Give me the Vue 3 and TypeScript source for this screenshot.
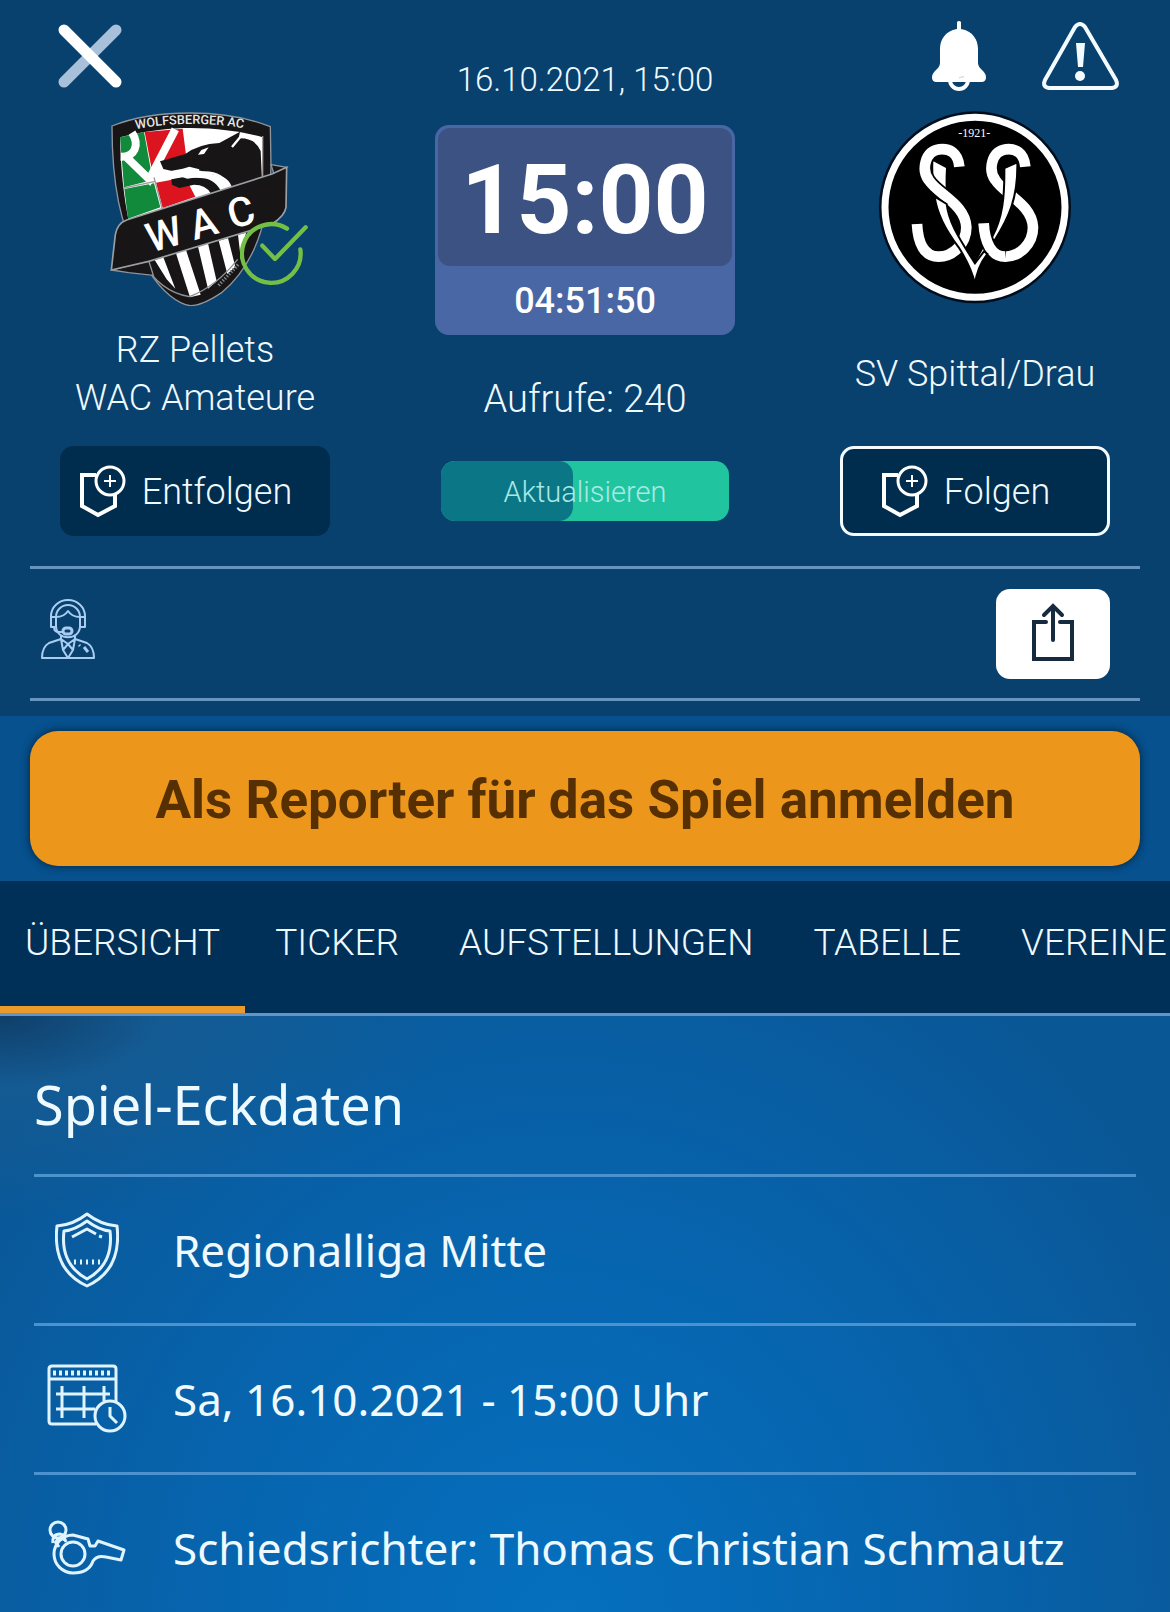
<script setup lang="ts">
import { ref } from 'vue'

type IconName = 'shield' | 'calendar' | 'whistle'

interface Fact {
  icon: IconName
  text: string
}

const tabs: string[] = ['ÜBERSICHT', 'TICKER', 'AUFSTELLUNGEN', 'TABELLE', 'VEREINE']
const activeTab = ref<string>('ÜBERSICHT')
const refreshProgress = ref<number>(46)

const facts: Fact[] = [
  { icon: 'shield', text: 'Regionalliga Mitte' },
  { icon: 'calendar', text: 'Sa, 16.10.2021 - 15:00 Uhr' },
  { icon: 'whistle', text: 'Schiedsrichter: Thomas Christian Schmautz' },
]
</script>

<template>
  <main class="page">
    <header class="match">
      <div class="board">
        <section class="side">
          <div class="tools tools-left">
            <button class="plain" type="button" aria-label="Schließen">
              <svg width="64" height="64" viewBox="0 0 64 64" fill="none" stroke-width="11" stroke-linecap="round">
                <path d="M58 6 6 58" stroke="#a9c0da" />
                <path d="M6 6 58 58" stroke="#fff" />
              </svg>
            </button>
          </div>
          <div class="crest">
            <svg class="wac" width="180" height="196" viewBox="214 298 540 588">
              <path d="M220 346C290 318 370 307 455 307c90 0 175 15 240 41l2 122c-7 180-57 300-147 375-40 27-70 40-95 40-35-5-85-40-125-105C260 700 220 560 220 346Z" fill="#171515" stroke="#8f959b" stroke-width="4" />
              <path d="M244 380c86-22 156-28 211-28 85 0 165 13 217 28v125L270 630c-15-70-24-160-26-250Z" fill="#fff" />
              <path d="M244 380 316 364 342 508 256 530Z M257 535 346 518 365 590 268 624Z" fill="#128a3b" />
              <path d="M318 364 432 354 442 432 366 452 342 490Z M352 516 440 500 470 558 372 592Z" fill="#dc1420" />
              <path d="M246 438c42 2 58-34 34-72M264 440l68 66 78-150" fill="none" stroke="#fff" stroke-width="24" />
              <path d="M364 452 440 430q40-30 102-33l62-34-4 20q50-2 66 38l4 90-88 26q-10-42-60-46l-42-12-80 2-26-6Z" fill="#171515" />
              <path d="M398 506l34-6 52 2q42 0 62 38l-30 8q-14-26-50-26l-44 10-22-10Z" fill="#171515" />
              <path d="M392 482l10 22 20-8 24 8 28-4 8-24-30-8-20 6Z" fill="#fff" />
              <path d="M478 432l10-14 22-8-14 20Z" fill="#fff" />
              <path d="M480 486q72-8 90 46M580 409l28-34" fill="none" stroke="#fff" stroke-width="7" />
              <path d="M672 376V500M256 532 350 512M346 500 370 592" stroke="#9c9c9c" stroke-width="4" />
              <path d="M348 748 374 740 410 834 384 806ZM412 728 442 718 486 852 454 860ZM478 708 508 698 534 812 508 834ZM540 690 568 682 590 768 566 790ZM598 672 622 666 606 742Z" fill="#fff" />
              <path d="M312 752q50 90 140 106 80-30 145-112" fill="none" stroke="#8f959b" stroke-width="4" />
              <path d="M540 824 600 760" stroke="#85888b" stroke-width="10" stroke-dasharray="4 5" />
              <path d="M218 778 330 750 344 794 270 786Z M697 462 744 470 706 490Z" fill="#171515" stroke="#8f959b" stroke-width="4" />
              <path d="M218 778 230 672q6-34 34-44L700 490l44-20-2 120q-4 26-42 50L330 752Z" fill="#171515" stroke="#9a9fa4" stroke-width="5" />
              <path id="wac-arc" d="M292 356Q460 322 644 358" fill="none" />
              <text class="wac-ring"><textPath href="#wac-arc">WOLFSBERGER AC</textPath></text>
              <text class="wac-name" transform="translate(336 726) rotate(-16)" x="0 136 254" y="0">WAC</text>
            </svg>
            <svg class="followed" width="68" height="66" viewBox="600 626 204 198" fill="none" stroke="#74bf45" stroke-width="13" stroke-linecap="round" stroke-linejoin="round">
              <path d="M741 652A88 88 0 1 0 781 714M667 703 705 743 797 648" />
            </svg>
          </div>
          <h2 class="team">RZ Pellets<br />WAC Amateure</h2>
          <button class="follow" type="button">
            <svg width="48" height="54" viewBox="0 0 48 54" fill="none" stroke="#fff" stroke-width="4">
              <path d="M18 10H4V41L20 50 37 41V30" />
              <circle cx="32" cy="16" r="14" stroke-width="3" />
              <path d="M26 16H38M32 10V22" stroke-width="2" />
            </svg>
            <span>Entfolgen</span>
          </button>
        </section>

        <section class="centre">
          <time class="date">16.10.2021, 15:00</time>
          <div class="clock">
            <strong class="kickoff">15:00</strong>
            <span class="countdown">04:51:50</span>
          </div>
          <p class="views">Aufrufe: 240</p>
          <button class="refresh" type="button">
            <span class="refresh-fill" :style="{ width: refreshProgress + '%' }"></span>
            <span class="refresh-text">Aktualisieren</span>
          </button>
        </section>

        <section class="side">
          <div class="tools tools-right">
            <button class="plain" type="button" aria-label="Benachrichtigungen">
              <svg width="56" height="72" viewBox="0 0 56 72">
                <path d="M26 2q2-2 4 0V9C42 11 47 20 47 29V43c0 6 8 8 8 14 0 4-2 5-5 5H6c-3 0-5-1-5-5 0-6 8-8 8-14V29C9 20 14 11 26 9Z" fill="#fff" />
                <path d="M19 60a9 9 0 0 0 18 0" fill="none" stroke="#fff" stroke-width="4" />
                <path d="M28 58q3-2 5-1" fill="none" stroke="#c3ced9" stroke-width="1" />
              </svg>
            </button>
            <button class="plain" type="button" aria-label="Problem melden">
              <svg width="78" height="70" viewBox="0 0 78 70" fill="none" stroke="#f4fbff" stroke-width="4" stroke-linejoin="round">
                <path d="M33 7Q38 1 43 7L74 60Q77 67 70 68H7Q0 67 3 60Z" />
                <path d="M34 23H43L41 47H36Z" fill="#f4fbff" stroke="none" />
                <circle cx="38" cy="56" r="5" fill="#f4fbff" stroke="none" />
              </svg>
            </button>
          </div>
          <div class="crest">
            <svg width="194" height="196" viewBox="56 298 582 588">
              <circle cx="347" cy="590" r="288" fill="#000d1c" />
              <circle cx="347" cy="590" r="270" fill="#000" stroke="#fff" stroke-width="21" />
              <text class="svs-year" x="345" y="379">-1921-</text>
              <path d="M222 452 260 472C256 540 262 580 270 610L244 620C226 560 220 500 222 452Z" fill="#fff" />
              <path d="M300 468C296 425 270 413 240 416 196 422 186 478 208 508 236 552 318 580 321 650 321 700 280 738 238 738 196 738 176 700 173 640" fill="none" stroke="#000" stroke-width="42" />
              <path d="M300 468C296 425 270 413 240 416 196 422 186 478 208 508 236 552 318 580 321 650 321 700 280 738 238 738 196 738 176 700 173 640" fill="none" stroke="#fff" stroke-width="32" />
              <path d="M498 468C494 425 468 413 440 416 396 422 386 478 408 508 436 552 518 580 521 650 521 700 480 738 438 738 396 738 376 700 373 640" fill="none" stroke="#fff" stroke-width="32" />
              <path d="M435 472 474 455C476 560 450 620 405 690L392 712 380 725 347 812 340 765 376 700 398 680C430 620 436 560 435 472Z" fill="#fff" stroke="#000" stroke-width="6" />
              <path d="M373 640C376 690 392 730 438 738" fill="none" stroke="#000" stroke-width="42" />
              <path d="M373 638C376 695 396 738 438 738" fill="none" stroke="#fff" stroke-width="32" />
              <path d="M226 558 262 580C268 630 290 670 347 758L374 722 384 730Q354 768 347 820 336 770 298 710C252 650 232 605 226 558Z" fill="#fff" stroke="#000" stroke-width="6" />
            </svg>
          </div>
          <h2 class="team">SV Spittal/Drau</h2>
          <button class="follow outlined" type="button">
            <svg width="48" height="54" viewBox="0 0 48 54" fill="none" stroke="#fff" stroke-width="4">
              <path d="M18 10H4V41L20 50 37 41V30" />
              <circle cx="32" cy="16" r="14" stroke-width="3" />
              <path d="M26 16H38M32 10V22" stroke-width="2" />
            </svg>
            <span>Folgen</span>
          </button>
        </section>
      </div>

      <div class="actions">
        <svg width="56" height="62" viewBox="0 0 56 62" fill="none" stroke="#a9cdf0" stroke-width="2" stroke-linejoin="round">
          <path d="M11 18A17 16 0 0 1 45 18V29H40V19A12 12 0 0 0 16 19V29H11ZM11 19H16M40 19H45" />
          <path d="M16 19q8 0 12-6 4 6 12 6V28c0 15-24 15-24 0Z" />
          <path d="M14 29q0 5 5 5h4" />
          <rect x="23" y="30" width="9" height="6" rx="3" stroke-width="3" />
          <path d="M21 38V41L9 45Q2 49 2 60H54Q54 49 47 45L35 41V38M21 41 28 46 35 41M28 46 23 52 28 60 33 52ZM21 41l2 11M35 41l-2 11" />
          <path d="M44 49l4 5M39 47l1 1" stroke-width="3" />
        </svg>
        <button class="share" type="button" aria-label="Teilen">
          <svg width="44" height="58" viewBox="0 0 44 58" fill="none" stroke="#172b40" stroke-width="4" stroke-linecap="round">
            <path d="M15 19H3V56H41V19H29" />
            <path d="M22 37V3M13 12 22 3 31 12" />
          </svg>
        </button>
      </div>
    </header>

    <div class="banner">
      <button class="report" type="button">Als Reporter für das Spiel anmelden</button>
    </div>

    <nav class="tabs" aria-label="Bereiche">
      <a
        v-for="tab in tabs"
        :key="tab"
        href="#"
        class="tab"
        :class="{ active: tab === activeTab }"
        @click.prevent="activeTab = tab"
      >{{ tab }}</a>
    </nav>

    <section class="details">
      <h1 class="heading">Spiel-Eckdaten</h1>
      <ul class="facts">
        <li v-for="fact in facts" :key="fact.icon" class="fact">
          <span class="fact-icon">
            <svg v-if="fact.icon === 'shield'" width="64" height="76" viewBox="0 0 64 76" fill="none" stroke="#dff4ff" stroke-width="3" stroke-linejoin="round">
              <path d="M32 2Q18 13 2 14-3 58 32 74 67 58 62 14 46 13 32 2Z" />
              <path d="M32 9Q20 18 9 19 5 52 32 67 59 52 55 19 44 18 32 9Z" />
              <path d="M17 25 32 17 41 22M44 24 47 25" />
              <path d="M19 50H47" stroke-width="5" stroke-dasharray="2 4" />
            </svg>
            <svg v-else-if="fact.icon === 'calendar'" width="80" height="70" viewBox="0 0 80 70" fill="none" stroke="#dff4ff" stroke-width="3" stroke-linejoin="round">
              <path d="M49 60H5Q2 60 2 57V5Q2 2 5 2H66Q69 2 69 5V38M2 15H69" />
              <path d="M6 9H66" stroke-width="5" stroke-dasharray="3 3" />
              <path d="M9 30H63M9 45H48M15 22V54M37 22V54M57 22V37" />
              <circle cx="63" cy="52" r="15" />
              <path d="M63 43V52L70 59" />
            </svg>
            <svg v-else width="80" height="58" viewBox="0 0 80 58" fill="none" stroke="#dff4ff" stroke-width="3" stroke-linejoin="round">
              <circle cx="11" cy="11" r="8" />
              <path d="M6 24q-1-9 7-9 5 1 4 7M9 25q0-5 4-5" />
              <path d="M8 22l4 6M17 18l2 5" />
              <circle cx="26" cy="35" r="12" />
              <path d="M26 16 41 20 43 27H48L51 22 77 31 74 41 59 38Q50 36 46 42 42 54 26 54A19 19 0 0 1 26 16Z" />
            </svg>
          </span>
          <span>{{ fact.text }}</span>
        </li>
      </ul>
    </section>
  </main>
</template>

<style>
html,
body {
  margin: 0;
  background: #0762ac;
}
</style>

<style scoped>
.page {
  overflow: hidden;
  color: #effaff;
  font-family: Roboto, "Liberation Sans", sans-serif;
  font-weight: 300;
}

button {
  margin: 0;
  padding: 0;
  border: 0;
  background: none;
  color: inherit;
  font: inherit;
  cursor: pointer;
}

svg {
  display: block;
  flex: none;
}

h1,
h2,
p,
ul {
  margin: 0;
  padding: 0;
  font-weight: inherit;
}

.match {
  padding: 0 30px 15px;
  background: #08406e;
}

.board {
  display: flex;
  justify-content: space-between;
  padding: 0 20px 30px;
}

.side {
  display: flex;
  flex-direction: column;
  align-items: center;
  width: 290px;
}

.tools {
  display: flex;
  align-self: stretch;
  box-sizing: border-box;
  height: 110px;
  padding-top: 20px;
}

.tools-left {
  padding: 24px 8px 0;
}

.tools-right {
  justify-content: flex-end;
  gap: 55px;
}

.plain {
  display: flex;
  align-items: flex-start;
}

.crest {
  position: relative;
  height: 196px;
}

.wac {
  margin-left: 10px;
}

.wac-ring {
  fill: #e6e6e6;
  font: 500 38px Roboto, sans-serif;
}

.wac-name {
  fill: #fff;
  font: 500 122px Roboto, sans-serif;
}

.svs-year {
  fill: #fff;
  font: 400 36px "Liberation Serif", serif;
  text-anchor: middle;
}

.followed {
  position: absolute;
  right: -18px;
  bottom: 20px;
}

.team {
  display: flex;
  align-items: center;
  height: 96px;
  margin: 20px 0 24px;
  font-size: 36px;
  line-height: 48px;
  text-align: center;
  white-space: nowrap;
}

.follow {
  display: flex;
  align-items: center;
  justify-content: center;
  gap: 16px;
  box-sizing: border-box;
  width: 270px;
  height: 90px;
  padding: 2px 20px 0 0;
  border-radius: 14px;
  background: #002c4d;
  font-size: 36px;
}

.outlined {
  border: 3px solid #f4fbff;
}

.centre {
  display: flex;
  flex-direction: column;
  align-items: center;
  width: 300px;
}

.date {
  margin-top: 58px;
  font-size: 33px;
  line-height: 44px;
  white-space: nowrap;
}

.clock {
  display: flex;
  flex-direction: column;
  align-self: stretch;
  box-sizing: border-box;
  height: 210px;
  margin-top: 23px;
  padding: 3px;
  border-radius: 14px;
  background: #4967a4;
  color: #fff;
  text-align: center;
}

.kickoff {
  height: 138px;
  border-radius: 12px;
  background: #3c5282;
  font-size: 96px;
  font-weight: 700;
  line-height: 144px;
}

.countdown {
  font-size: 36px;
  font-weight: 500;
  line-height: 70px;
}

.views {
  margin-top: 40px;
  font-size: 38px;
  line-height: 48px;
}

.refresh {
  position: relative;
  width: 288px;
  height: 60px;
  margin-top: 38px;
  padding-top: 2px;
  overflow: hidden;
  border-radius: 14px;
  background: #20c5a0;
  color: #a9e8e4;
  font-size: 29px;
}

.refresh-fill {
  position: absolute;
  inset: 0 auto 0 0;
  border-radius: 0 14px 14px 0;
  background: #0b7786;
}

.refresh-text {
  position: relative;
}

.actions {
  display: flex;
  align-items: center;
  justify-content: space-between;
  box-sizing: border-box;
  height: 135px;
  padding: 0 30px 0 10px;
  border: solid #6794bf;
  border-width: 3px 0;
}

.actions > svg {
  margin-bottom: 10px;
}

.share {
  display: flex;
  align-items: center;
  justify-content: center;
  width: 114px;
  height: 90px;
  padding-bottom: 4px;
  box-sizing: border-box;
  border-radius: 14px;
  background: #fff;
}

.banner {
  padding: 15px 30px;
  background: #06518e;
}

.report {
  width: 100%;
  height: 135px;
  padding-top: 3px;
  border-radius: 28px;
  background: #ec971c;
  box-shadow: 0 0 9px #06213c;
  color: #563003;
  font-size: 53px;
  font-weight: 700;
}

.tabs {
  display: flex;
  overflow: hidden;
  border-bottom: 3px solid #6396c7;
  background: #003057;
}

.tab {
  flex: none;
  box-sizing: border-box;
  height: 132px;
  padding: 0 30px;
  border-bottom: 7px solid transparent;
  color: inherit;
  font-size: 37px;
  line-height: 124px;
  text-decoration: none;
}

.tab:first-child {
  padding: 0 25px;
}

.active {
  border-bottom-color: #eb9b2c;
}

.details {
  padding: 0 34px;
  background:
    radial-gradient(ellipse 460px 200px at 0 0, #0f3f6a 0%, #195c91aa 35%, #195c9160 65%, transparent 100%),
    radial-gradient(ellipse 720px 780px at 48% 100%, #0570bf 0%, #0763ac 55%, #0a5796 100%);
  font-family: "Noto Sans", "Open Sans", sans-serif;
  font-weight: 400;
}

.heading {
  padding-top: 18px;
  font-size: 54px;
  line-height: 140px;
}

.facts {
  list-style: none;
}

.fact {
  display: flex;
  align-items: center;
  box-sizing: border-box;
  height: 149px;
  border-top: 3px solid #4b92cf;
  font-size: 44px;
  white-space: nowrap;
}

.fact-icon {
  display: flex;
  justify-content: center;
  width: 106px;
  margin-right: 33px;
}
</style>
